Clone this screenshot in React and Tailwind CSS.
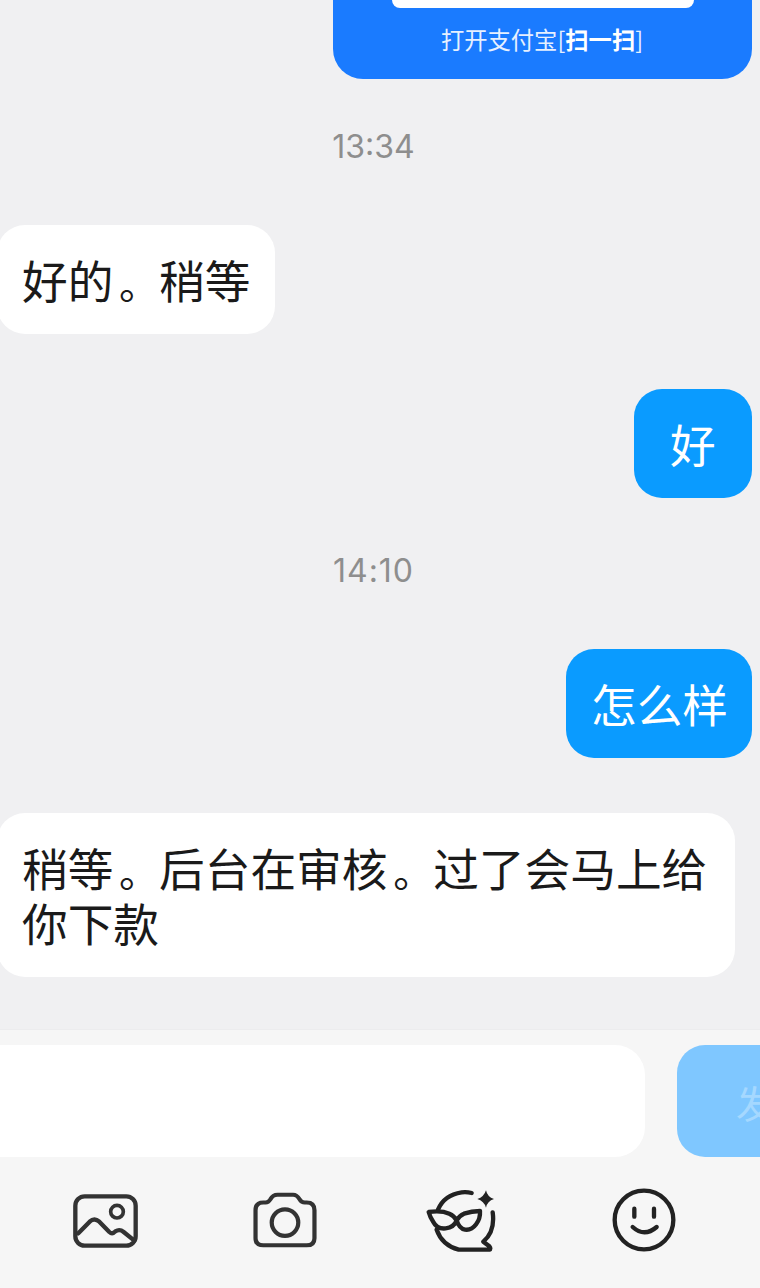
const cjk = "font-['Noto_Sans_CJK_SC','Noto_Sans',sans-serif]";

function ImageIcon() {
  return (
    <svg width="68" height="58" viewBox="90 66 204 174" fill="none" stroke="#333333" strokeWidth="13" strokeLinecap="round" strokeLinejoin="round" className="mt-[2px] shrink-0">
      <rect x="103" y="79" width="181" height="148" rx="28" />
      <circle cx="228" cy="125" r="19" strokeWidth="11" />
      <path d="M112 190 L146 155 Q160 142 175 155 L205 186 Q214 194 223 184 Q236 176 248 186 L280 212" />
    </svg>
  );
}
function CameraIcon() {
  return (
    <svg width="68" height="62" viewBox="630 60 210 180" fill="none" stroke="#333333" strokeWidth="13" strokeLinecap="round" strokeLinejoin="round" className="shrink-0">
      <path d="M668 96 H675 Q684 96 690 86 Q697 72 712 72 H760 Q772 72 780 86 Q786 96 796 96 H802 Q826 96 826 120 V206 Q826 228 802 228 H668 Q644 228 644 206 V120 Q644 96 668 96 Z" />
      <circle cx="735" cy="158" r="41" />
    </svg>
  );
}
function MaskIcon() {
  return (
    <svg width="72" height="66" viewBox="75 50 216 198" fill="none" stroke="#222222" strokeWidth="13" strokeLinecap="round" strokeLinejoin="round" className="shrink-0">
      <path d="M215 68 Q200 64 185 66 Q132 74 114 118" />
      <path d="M110 178 Q126 224 176 238 H268 Q274 236 268 228 L250 214 Q286 184 278 126" />
      <path d="M86 125 Q125 120 148 130 Q162 136 170 150 Q178 136 192 130 Q215 122 240 122 C242 150 222 182 195 178 Q178 175 170 150 C160 178 115 185 100 155 Q90 140 86 125 Z" />
      <path d="M258 60 Q262 80 282 86 Q262 92 258 112 Q252 92 232 86 Q252 80 258 60 Z" fill="#222222" stroke="none" />
    </svg>
  );
}
function SmileIcon() {
  return (
    <svg width="64" height="64" viewBox="636 56 192 192" fill="none" stroke="#222222" strokeWidth="13" strokeLinecap="round" className="shrink-0">
      <circle cx="732" cy="152" r="88" />
      <path d="M703 118 V142 M762 118 V142" strokeWidth="13" />
      <path d="M698 173 Q733 205 770 173" />
    </svg>
  );
}

function Time({ children, className }) {
  return (
    <div className={"flex justify-center pr-[13px] font-['Inter',sans-serif] text-[32px] leading-[40px] text-[#8e8e8e] " + className}>
      {children}
    </div>
  );
}

function Dot() {
  return <span className="pl-[5.7px] text-[40px] leading-none">。</span>;
}

function Bubble({ side, children, className = "" }) {
  const look = side === "right" ? "bg-[#0a9bff] text-white" : "bg-white text-[#1a1a1a]";
  return (
    <div className={`${cjk} ${look} text-[45.7px] leading-[54.5px] pl-[25px] pr-[23px] py-[27.25px] rounded-[28px] ${className}`}>
      {children}
    </div>
  );
}

export default function App() {
  return (
    <div className="flex h-[1288px] w-[760px] flex-col overflow-hidden bg-[#f0f0f2]">
      <div className="flex-1">
        <div className="ml-[333px] mr-2 flex h-[79px] flex-col items-center rounded-b-[30px] bg-[#1a7bff]">
          <div className="h-2 w-[302px] rounded-b-[14px] bg-white" />
          <div className={`${cjk} mt-[16px] -ml-[1px] text-[23.3px] leading-[30px] text-[#e6f0ff]`}>
            打开支付宝[<span className="font-bold text-white">扫一扫</span>]
          </div>
        </div>
        <Time className="mt-[48px]">13:34</Time>
        <div className="mt-[58px] flex">
          <Bubble side="left" className="-ml-[3px] w-[278px]">好的<Dot />稍等</Bubble>
        </div>
        <div className="mt-[55px] flex justify-end pr-2">
          <Bubble side="right" className="w-[118px] pl-[36px]">好</Bubble>
        </div>
        <Time className="mt-[53px] tracking-[1px]">14:10</Time>
        <div className="mt-[58px] flex justify-end pr-2">
          <Bubble side="right" className="w-[186px] pl-[24px]">怎么样</Bubble>
        </div>
        <div className="mt-[55px] flex">
          <Bubble side="left" className="-ml-[3px] w-[738px]">稍等<Dot />后台在审核<Dot />过了会马上给<br />你下款</Bubble>
        </div>
      </div>
      <div className="border-t border-[#ececee] bg-[#f6f6f6]">
        <div className="flex items-stretch gap-8 pt-[15px]">
          <div className="-ml-[30px] h-[112px] w-[675px] shrink-0 rounded-[30px] bg-white" />
          <div className={`${cjk} flex h-[112px] w-[120px] shrink-0 items-center rounded-[28px] bg-[#7fc7ff] pl-[59px] text-[38px] text-[#a5d8ff]`}>
            <span className="whitespace-nowrap">发送</span>
          </div>
        </div>
        <div className="flex h-[131px] items-center pb-[5px] pl-[71px]">
          <ImageIcon />
          <div className="ml-[112px]"><CameraIcon /></div>
          <div className="ml-[106px]"><MaskIcon /></div>
          <div className="ml-[115px]"><SmileIcon /></div>
        </div>
      </div>
    </div>
  );
}
